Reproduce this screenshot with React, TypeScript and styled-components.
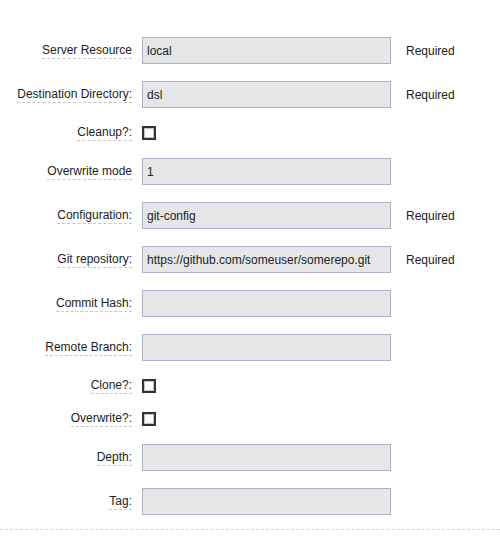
import styled, { createGlobalStyle } from 'styled-components'

const GlobalStyle = createGlobalStyle`
  body {
    margin: 0;
    background: #fff;
    font-family: 'Liberation Sans', Arial, sans-serif;
    font-size: 12px;
    color: #222;
  }
`

const FormStyles = styled.form`
  padding-top: 37px;
  padding-bottom: 14px;
  border-bottom: 1px dashed #d4d4d4;
  display: grid;
  grid-template-columns: 132px 249px auto;
  column-gap: 10px;
  row-gap: 17px;
  align-items: center;
`

const LabelCell = styled.div`
  display: flex;
  justify-content: flex-end;
`

const ControlCell = styled.div`
  display: flex;
  align-items: center;
`

const LabelText = styled.label`
  display: block;
  line-height: 14px;
  padding-bottom: 1px;
  border-bottom: 1px dashed #c8c8c8;
`

const TextInput = styled.input`
  box-sizing: border-box;
  width: 249px;
  height: 27px;
  margin: 0;
  padding: 5px 4px;
  font-family: inherit;
  font-size: 12px;
  line-height: 15px;
  color: #222;
  background: #e6e6e8;
  border: 1px solid #b0b0c8;
  border-radius: 0;
  outline: none;
`

const CheckBox = styled.input`
  appearance: none;
  box-sizing: border-box;
  display: block;
  width: 14px;
  height: 14px;
  margin: 0;
  background: #fff;
  border: 2px solid #333;
  box-shadow: inset 0 0 0 1px #c4c4c4;
  border-radius: 0;
`

const Hint = styled.span`
  margin-left: 5px;
`

type Field = {
  label: string
  kind: 'text' | 'check'
  value?: string
  required?: boolean
}

const fields: Field[] = [
  { label: 'Server Resource', kind: 'text', value: 'local', required: true },
  { label: 'Destination Directory:', kind: 'text', value: 'dsl', required: true },
  { label: 'Cleanup?:', kind: 'check' },
  { label: 'Overwrite mode', kind: 'text', value: '1' },
  { label: 'Configuration:', kind: 'text', value: 'git-config', required: true },
  {
    label: 'Git repository:',
    kind: 'text',
    value: 'https://github.com/someuser/somerepo.git',
    required: true,
  },
  { label: 'Commit Hash:', kind: 'text' },
  { label: 'Remote Branch:', kind: 'text' },
  { label: 'Clone?:', kind: 'check' },
  { label: 'Overwrite?:', kind: 'check' },
  { label: 'Depth:', kind: 'text' },
  { label: 'Tag:', kind: 'text' },
]

function FieldRow({ field, id }: { field: Field; id: string }) {
  return (
    <>
      <LabelCell>
        <LabelText htmlFor={id}>{field.label}</LabelText>
      </LabelCell>
      <ControlCell>
        {field.kind === 'text' ? (
          <TextInput id={id} type='text' defaultValue={field.value ?? ''} />
        ) : (
          <CheckBox id={id} type='checkbox' />
        )}
      </ControlCell>
      <ControlCell>{field.required && <Hint>Required</Hint>}</ControlCell>
    </>
  )
}

export default function App() {
  return (
    <>
      <GlobalStyle />
      <FormStyles onSubmit={(e) => e.preventDefault()}>
        {fields.map((f, i) => (
          <FieldRow key={f.label} field={f} id={`field-${i}`} />
        ))}
      </FormStyles>
    </>
  )
}
